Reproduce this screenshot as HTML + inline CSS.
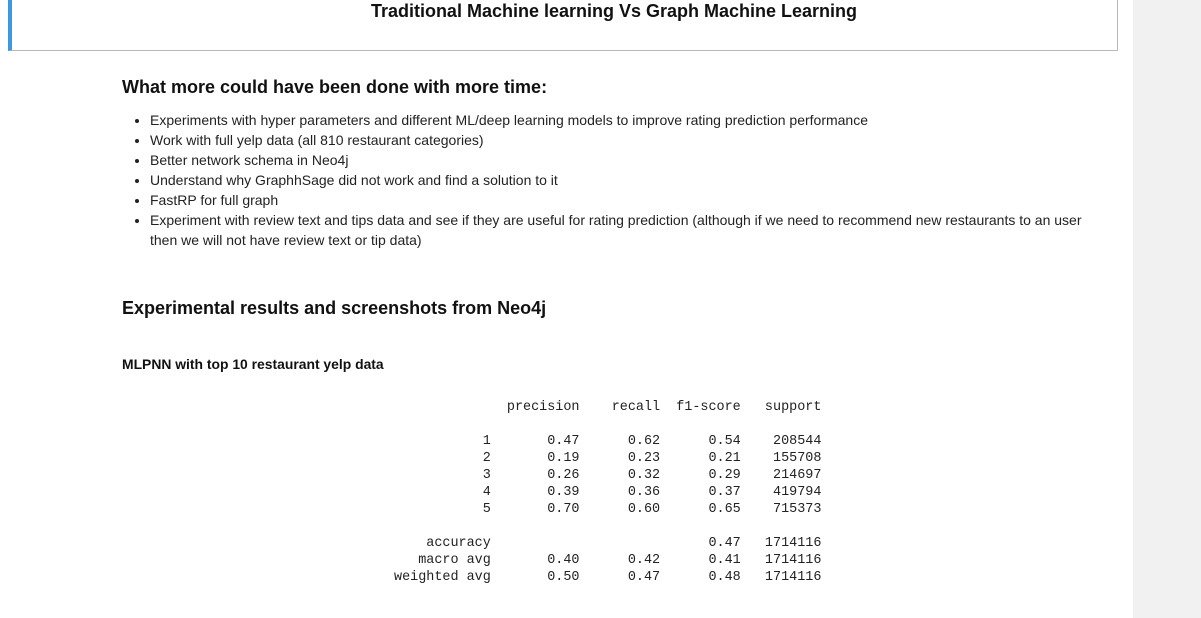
<!DOCTYPE html>
<html><head><meta charset="utf-8"><style>
html,body{margin:0;padding:0;width:1201px;height:618px;overflow:hidden;background:#fff;font-family:"Liberation Sans",Arial,sans-serif;color:#111}
.side{position:absolute;left:1133px;top:0;width:68px;height:618px;background:#f1f1f1}
.box{position:absolute;left:8px;top:-2px;width:1110px;height:53px;border:1px solid #b8b8b8;border-left:4px solid #3e98e0;border-top:none;box-sizing:border-box}
.title{position:absolute;left:0;width:1228px;top:1px;text-align:center;font-weight:bold;font-size:18px}
.a{position:absolute;white-space:nowrap}
h2{position:absolute;margin:0;font-size:18px;font-weight:bold;left:122px;white-space:nowrap}
ul{position:absolute;left:122px;top:110px;margin:0;padding-left:28px;font-size:14px;line-height:20px;width:940px;color:#222}
li{margin:0}
pre{position:absolute;left:394px;top:399px;margin:0;font-family:"Liberation Mono",monospace;font-size:13.45px;line-height:17px;color:#222}
</style></head><body>
<div class="side"></div>
<div class="box"></div>
<div class="title">Traditional Machine learning Vs Graph Machine Learning</div>
<h2 style="top:77px">What more could have been done with more time:</h2>
<ul>
<li>Experiments with hyper parameters and different ML/deep learning models to improve rating prediction performance</li>
<li>Work with full yelp data (all 810 restaurant categories)</li>
<li>Better network schema in Neo4j</li>
<li>Understand why GraphhSage did not work and find a solution to it</li>
<li>FastRP for full graph</li>
<li>Experiment with review text and tips data and see if they are useful for rating prediction (although if we need to recommend new restaurants to an user then we will not have review text or tip data)</li>
</ul>
<h2 style="top:298px">Experimental results and screenshots from Neo4j</h2>
<div class="a" style="left:122px;top:356px;font-size:13.9px;font-weight:bold">MLPNN with top 10 restaurant yelp data</div>
<pre>              precision    recall  f1-score   support

           1       0.47      0.62      0.54    208544
           2       0.19      0.23      0.21    155708
           3       0.26      0.32      0.29    214697
           4       0.39      0.36      0.37    419794
           5       0.70      0.60      0.65    715373

    accuracy                           0.47   1714116
   macro avg       0.40      0.42      0.41   1714116
weighted avg       0.50      0.47      0.48   1714116</pre>
</body></html>
